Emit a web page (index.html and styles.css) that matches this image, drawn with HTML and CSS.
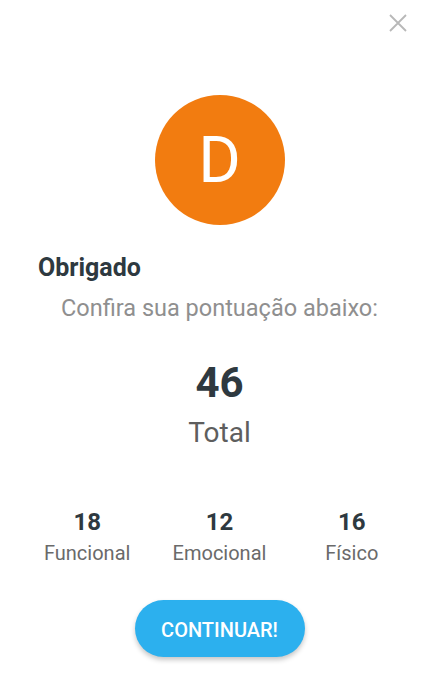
FILE: index.html
```html
<!DOCTYPE html>
<html lang="pt">
<head>
<meta charset="utf-8">
<link rel="stylesheet" href="styles.css">
</head>
<body>
<div class="dialog">
  <div class="topbar">
    <button class="close" aria-label="Fechar">
      <svg width="20" height="20" viewBox="0 0 20 20"><path d="M2 2 L18 18 M18 2 L2 18" stroke="#b8b8b8" stroke-width="1.8" fill="none"/></svg>
    </button>
  </div>
  <div class="avatar">D</div>
  <h1 class="title">Obrigado</h1>
  <p class="subtitle">Confira sua pontuação abaixo:</p>
  <div class="total">
    <div class="total-num">46</div>
    <div class="total-label">Total</div>
  </div>
  <div class="stats">
    <div class="stat"><div class="stat-num">18</div><div class="stat-label">Funcional</div></div>
    <div class="stat"><div class="stat-num">12</div><div class="stat-label">Emocional</div></div>
    <div class="stat"><div class="stat-num">16</div><div class="stat-label">Físico</div></div>
  </div>
  <div class="actions">
    <button class="btn">CONTINUAR!</button>
  </div>
</div>
</body>
</html>
```
FILE: styles.css
```css
* { box-sizing: border-box; }
html, body { margin: 0; padding: 0; background: #ffffff; }
body { font-family: Roboto, "Noto Sans", sans-serif; width: 439px; height: 693px; overflow: hidden; }
.dialog { display: flex; flex-direction: column; }
.topbar { height: 46px; display: flex; justify-content: flex-end; align-items: center; padding-right: 31px; }
.close { border: 0; background: none; padding: 0; width: 20px; height: 20px; display: flex; }
.avatar {
  align-self: center; width: 130px; height: 130px; margin-top: 49px; border-radius: 50%;
  background: #f27c10; color: #fff; display: flex; align-items: center; justify-content: center;
  font-size: 65px; font-weight: 400; line-height: 1;
}
.title { margin: 28px 0 0 38px; font-size: 25px; line-height: 30px; font-weight: 700; color: #2e3940; }
.subtitle { margin: 12px 0 0; text-align: center; font-size: 23.5px; line-height: 27px; color: #8f8f8f; }
.total { display: flex; flex-direction: column; align-items: center; margin-top: 36px; }
.total-num { font-size: 42px; line-height: 50px; font-weight: 700; color: #2e3940; }
.total-label { margin-top: 8px; font-size: 28px; line-height: 33px; color: #5e5e5e; }
.stats { display: grid; grid-template-columns: repeat(3, 1fr); padding: 0 21px; margin-top: 59px; }
.stat { display: flex; flex-direction: column; align-items: center; }
.stat-num { font-size: 24px; line-height: 28px; font-weight: 700; color: #2e3940; }
.stat-label { margin-top: 5px; font-size: 20px; line-height: 24px; color: #6a6a6a; }
.actions { display: flex; justify-content: center; margin-top: 35px; }
.btn {
  width: 170px; height: 57px; border: 0; border-radius: 29px; background: #2cb0ee; color: #fff;
  padding: 3px 0 0; font-family: Roboto, sans-serif; font-size: 20px; font-weight: 500;
  box-shadow: 0 3px 5px rgba(0,0,0,0.22);
}
```
